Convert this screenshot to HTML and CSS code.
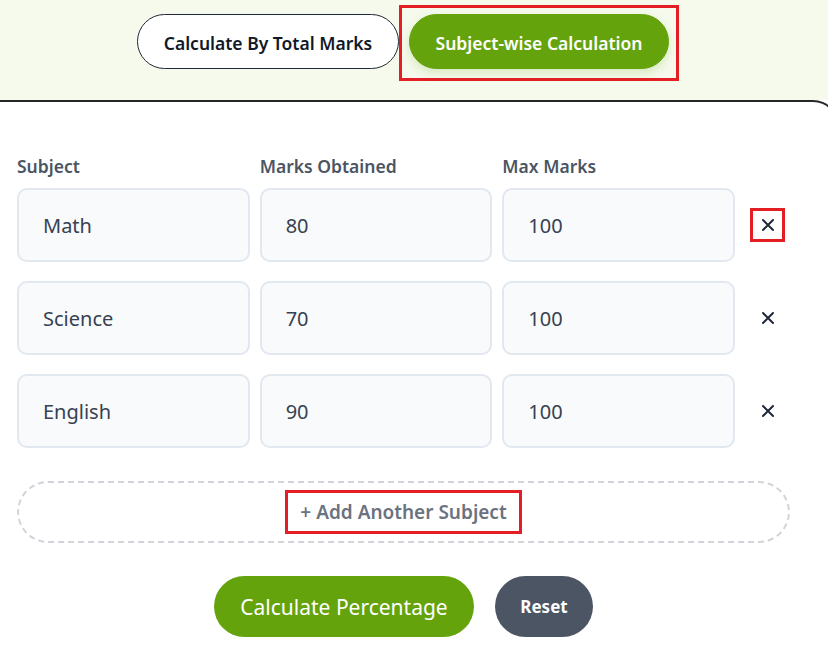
FILE: index.html
```html
<!DOCTYPE html>
<html lang="en">
<head>
    <meta charset="UTF-8">
    <meta name="viewport" content="width=device-width, initial-scale=1.0">
    <title>Percentage Calculator</title>
    <link rel="stylesheet" href="styles.css">
</head>
<body>
    <div class="top-bar">
        <div class="mode-tabs">
            <button class="tab-btn">Calculate By Total Marks</button>
            <div class="tab-mark">
                <button class="tab-btn active">Subject-wise Calculation</button>
            </div>
        </div>
    </div>

    <div class="calc-card">
        <div class="subject-grid">
            <div class="col-label">Subject</div>
            <div class="col-label">Marks Obtained</div>
            <div class="col-label">Max Marks</div>
            <div></div>

            <input class="field" type="text" value="Math">
            <input class="field" type="text" value="80">
            <input class="field" type="text" value="100">
            <button class="remove-btn marked" aria-label="Remove">
                <svg width="14" height="14" viewBox="0 0 14 14"><path d="M2 2L12 12M12 2L2 12" stroke="#1f2937" stroke-width="2" stroke-linecap="round"/></svg>
            </button>

            <input class="field" type="text" value="Science">
            <input class="field" type="text" value="70">
            <input class="field" type="text" value="100">
            <button class="remove-btn" aria-label="Remove">
                <svg width="14" height="14" viewBox="0 0 14 14"><path d="M2 2L12 12M12 2L2 12" stroke="#1f2937" stroke-width="2" stroke-linecap="round"/></svg>
            </button>

            <input class="field" type="text" value="English">
            <input class="field" type="text" value="90">
            <input class="field" type="text" value="100">
            <button class="remove-btn" aria-label="Remove">
                <svg width="14" height="14" viewBox="0 0 14 14"><path d="M2 2L12 12M12 2L2 12" stroke="#1f2937" stroke-width="2" stroke-linecap="round"/></svg>
            </button>
        </div>

        <button class="add-btn"><span class="add-label">+ Add Another Subject</span></button>

        <div class="action-row">
            <button class="calc-btn">Calculate Percentage</button>
            <button class="reset-btn">Reset</button>
        </div>
    </div>
</body>
</html>
```

FILE: styles.css
```css
body {
    font-family: "Noto Sans", "Open Sans", sans-serif;
    margin: 0;
    background: #ffffff;
    overflow: hidden;
    color: #1f2937;
}

button {
    font-family: inherit;
    cursor: pointer;
}

.top-bar {
    background: #f5faec;
    height: 100px;
    box-sizing: border-box;
    padding-top: 14px;
}

.mode-tabs {
    display: flex;
    align-items: flex-start;
    padding-left: 137px;
}

.tab-btn {
    height: 55px;
    width: 262px;
    border-radius: 28px;
    border: 1px solid #1f2937;
    background: #ffffff;
    color: #111827;
    font-size: 17.5px;
    font-weight: 600;
    padding: 2px 0 0;
}

.tab-mark {
    margin-top: -9px;
    padding: 6px 7px 9px;
    border: 3px solid #e31e24;
}

.tab-btn.active {
    display: block;
    width: 260px;
    background: #65a30d;
    border-color: #65a30d;
    color: #ffffff;
    box-shadow: 0 4px 10px rgba(101, 163, 13, 0.2);
}

.calc-card {
    margin-left: -30px;
    width: 869px;
    box-sizing: border-box;
    padding: 53px 47px 20px;
    border-top: 2px solid #27272a;
    border-right: 2px solid #27272a;
    border-top-right-radius: 26px;
    background: #ffffff;
}

.subject-grid {
    display: grid;
    grid-template-columns: 1fr 1fr 1fr 45px;
    column-gap: 10px;
    row-gap: 19px;
    align-items: center;
}

.col-label {
    font-size: 17.5px;
    font-weight: 600;
    color: #4b5563;
    line-height: 22px;
    margin-bottom: -8px;
}

.field {
    height: 74px;
    box-sizing: border-box;
    width: 100%;
    border: 2px solid #e2e8f0;
    border-radius: 10px;
    background: #f8fafc;
    padding: 0 24px;
    font-family: inherit;
    font-size: 20px;
    color: #374151;
}

.remove-btn {
    justify-self: center;
    width: 35px;
    height: 34px;
    padding: 0;
    border: 3px solid transparent;
    background: none;
    display: flex;
    align-items: center;
    justify-content: center;
}

.remove-btn.marked {
    border-color: #e31e24;
}

.add-btn {
    display: flex;
    justify-content: center;
    align-items: center;
    width: 100%;
    height: 62px;
    margin-top: 33px;
    border: 2px dashed #d1d5db;
    border-radius: 31px;
    background: #ffffff;
    color: #6b7280;
    font-size: 19px;
    font-weight: 600;
}

.add-label {
    padding: 6px 12px;
    border: 3px solid #e31e24;
}

.action-row {
    display: flex;
    justify-content: center;
    gap: 21px;
    margin-top: 33px;
}

.calc-btn {
    height: 61px;
    width: 260px;
    border: none;
    border-radius: 31px;
    background: #65a30d;
    color: #ffffff;
    font-size: 21px;
}

.reset-btn {
    height: 61px;
    width: 98px;
    border: none;
    border-radius: 31px;
    background: #4b5563;
    color: #ffffff;
    font-size: 17px;
    font-weight: 700;
}
```
